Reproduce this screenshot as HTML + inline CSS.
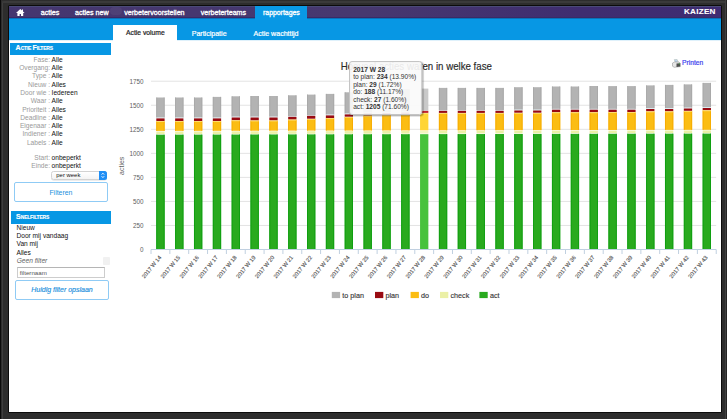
<!DOCTYPE html>
<html><head><meta charset="utf-8">
<style>
*{margin:0;padding:0;box-sizing:border-box}
html,body{width:727px;height:419px;overflow:hidden;background:#2d2d2d;font-family:"Liberation Sans",sans-serif}
.a{position:absolute;white-space:nowrap}
.f{position:absolute}
.screen{position:absolute;left:9px;top:6px;width:712px;height:406px;background:#fff;overflow:hidden}
.nav{position:absolute;left:9px;top:6px;width:712px;height:12.4px;background:linear-gradient(90deg,#45366f 0%,#47386f 50%,#3f2d70 80%,#3f2c72 100%);border-top:0.8px solid #4a4a78;border-bottom:1px solid #3a2a66}
.nav .it{position:absolute;top:0;height:12.3px;line-height:12.6px;color:#fff;font-size:7.1px;white-space:nowrap;-webkit-text-stroke:0.3px #fff}
.nav .act{background:#0797e4}
.blue{position:absolute;left:9px;top:18.4px;width:712px;height:21.3px;background:#0797e4;border-top:1px solid #0a72b8}
.tab{position:absolute;top:25.7px;height:14px;line-height:15px;font-size:7.05px;color:#fff;white-space:nowrap;-webkit-text-stroke:0.2px currentColor}
.tab.sel{background:#fff;color:#222}
.sbh{position:absolute;background:#0797e4;color:#fff;font-weight:bold;font-size:7px;white-space:nowrap;-webkit-text-stroke:0.15px #fff}
.sc{font-size:4.9px;letter-spacing:-0.15px}
.lab{position:absolute;color:#999;font-size:6.6px;line-height:8.29px;text-align:right;white-space:nowrap}
.val{position:absolute;color:#111;font-size:6.6px;line-height:8.29px;white-space:nowrap}
.btn{position:absolute;border:1.2px solid #8fcbf5;border-radius:2px;color:#1b8fdc;text-align:center;font-size:6.8px;background:#fff;white-space:nowrap}
.chart{position:absolute;left:0;top:0}
.chart text{font-family:"Liberation Sans",sans-serif}
.yl{font-size:6.3px;fill:#606060}
.xl{font-size:5.65px;fill:#505050;stroke:#505050;stroke-width:0.12px}
.yt{font-size:7px;fill:#606060}
.title{font-size:9.7px;fill:#2a2a2a;stroke:#2a2a2a;stroke-width:0.15px}
.lg{font-size:7.2px;fill:#333;stroke:#333;stroke-width:0.12px}
.tt{font-size:6.6px;fill:#333}
.b{font-weight:bold}
</style></head><body>
<div class="f" style="left:0;top:0;width:0.9px;height:419px;background:#0a0a0a"></div>
<div class="f" style="left:1.5px;top:1px;width:1.9px;height:418px;background:#3e3e3e;border-radius:3px 0 0 0"></div>
<div class="f" style="left:1.5px;top:1.1px;width:725px;height:1.7px;background:#3a3a3a;border-radius:3px 3px 0 0"></div>
<div class="f" style="left:724.6px;top:0;width:1.4px;height:419px;background:#404040"></div>
<div class="f" style="left:726px;top:0;width:1px;height:419px;background:#242424"></div>
<div class="f" style="left:7.9px;top:4.8px;width:714px;height:408.7px;background:#0c0c0c;border-radius:1.5px"></div>
<div class="screen"></div>
<div class="blue"></div>
<div class="a" style="left:177px;top:40px;width:544px;height:1px;background:#dff1fb"></div>
<div class="a" style="left:9px;top:40px;width:104px;height:1px;background:#dff1fb"></div>
<div class="nav">
  <div class="it" style="left:6.6px;top:1.9px;width:9px;height:8px;-webkit-text-stroke:0"><svg width="9" height="8" viewBox="0 0 9 8" style="display:block"><path d="M4.3 0 L0 4 L1.4 4 L1.4 7 L3.6 7 L3.6 5 L5 5 L5 7 L7.2 7 L7.2 4 L8.6 4 L7.0 2.5 L7.0 0.6 L6.0 0.6 L6.0 1.6 Z" fill="#fff"/></svg></div>
  <div class="it" style="left:31.8px">acties</div>
  <div class="it" style="left:66px">acties new</div>
  <div class="a" style="left:101px;top:0.4px;width:11.5px;height:8px;border-radius:4px;background:rgba(255,255,255,0.05)"></div>
  <div class="it" style="left:115.2px">verbetervoorstellen</div>
  <div class="it" style="left:191.7px">verbeterteams</div>
  <div class="it act" style="left:246px;top:-0.8px;height:14.2px;line-height:14.4px;z-index:2;width:52.3px;padding-left:8px;font-size:6.9px;background:#0999e6">rapportages</div>
  <div class="it" style="left:675px;top:-0.6px;font-weight:bold;letter-spacing:0.25px;font-size:8.1px;-webkit-text-stroke:0.1px #fff">KAIZEN</div>
</div>
<div class="a" style="left:113.2px;top:25.4px;width:63.8px;height:14.4px;background:#fff"></div>
<div class="tab" style="left:126px;top:26px;height:14px;line-height:14px;font-size:6.75px;color:#222">Actie volume</div>
<div class="tab" style="left:191.7px">Participatie</div>
<div class="tab" style="left:253.5px">Actie wachttijd</div>

<div class="sbh" style="left:10.3px;top:43px;width:100.7px;height:11.8px;line-height:10.9px;padding-left:5.3px"><span style="font-size:7px">A</span><span class="sc">CTIE </span><span style="font-size:7px">F</span><span class="sc">ILTERS</span></div>
<div class="lab" style="left:0;width:50px;top:55.8px">Fase:<br>Overgang:<br>Type :<br>Nieuw :<br>Door wie :<br>Waar :<br>Prioriteit :<br>Deadline :<br>Eigenaar :<br>Indiener :<br>Labels :</div>
<div class="val" style="left:51.6px;top:55.8px">Alle<br>Alle<br>Alle<br>Alles<br>Iedereen<br>Alle<br>Alles<br>Alle<br>Alle<br>Alle<br>Alle</div>
<div class="lab" style="left:0;width:50px;top:153.6px">Start:<br>Einde:</div>
<div class="val" style="left:51.6px;top:153.6px">onbeperkt<br>onbeperkt</div>
<div class="a" style="left:51.4px;top:170.5px;width:55.4px;height:9.1px;border:0.6px solid #d2d2d2;border-radius:2.5px;background:linear-gradient(#fff,#f4f4f4);box-shadow:0 0.4px 0.6px rgba(0,0,0,0.15);font-size:5.95px;line-height:7.2px;padding-left:3.9px;color:#111">per week</div>
<div class="a" style="left:99px;top:170.5px;width:7.8px;height:9.1px;background:#1f8ef5;border-radius:0 2.5px 2.5px 0"><svg width="8" height="9" viewBox="0 0 8 9" style="display:block"><path d="M2.6 3.6 L3.9 2.2 L5.2 3.6 M2.6 5.2 L3.9 6.6 L5.2 5.2" stroke="#fff" stroke-width="0.9" fill="none"/></svg></div>
<div class="btn" style="left:13.9px;top:182.4px;width:94px;height:19.2px;line-height:16px;padding-top:1.6px;font-size:6.9px">Filteren</div>

<div class="sbh" style="left:10.5px;top:211.3px;width:100px;height:12.4px;line-height:12px;padding-left:5.6px"><span style="font-size:7px">S</span><span class="sc">NELFILTERS</span></div>
<div class="val" style="left:16.5px;top:223.8px;line-height:8.3px">Nieuw<br>Door mij vandaag<br>Van mij<br>Alles</div>
<div class="val" style="left:16.7px;top:256.6px;color:#666;font-style:italic;font-size:6.65px">Geen filter</div>
<div class="a" style="left:103.2px;top:257px;width:7.2px;height:8px;background:#f1f1f1;border-radius:1px"></div>
<div class="a" style="left:17.2px;top:267.2px;width:87.8px;height:11px;border:0.6px solid #cdcdcd;border-top-color:#b5b5b5;font-size:6.2px;line-height:10px;padding-left:1.5px;color:#555">filternaam</div>
<div class="btn" style="left:15px;top:280.3px;width:94px;height:19.3px;line-height:17px;font-size:7px;font-style:italic;-webkit-text-stroke:0.15px #1b8fdc">Huidig filter opslaan</div>

<div class="a" style="left:672px;top:59px;width:9px;height:9px"><svg width="9" height="9" viewBox="0 0 9 9" style="display:block"><path d="M2.3 0.6 L5.2 0.6 L6.2 3.2 L3.2 3.2 Z" fill="#e8eef5" stroke="#9aa" stroke-width="0.5"/><path d="M3 1.5 L4.6 1.5 L5 2.6 L3.4 2.6 Z" fill="#8ab4e8"/><path d="M0.5 4 L2.5 3 L7 3 L8.3 4.3 L8.3 7.6 L2.2 8.3 L0.5 7.2 Z" fill="#e6e6e6" stroke="#8a8a8a" stroke-width="0.5"/><path d="M4.5 4.6 L8.2 4.3 L8.2 7.6 L4.5 8.1 Z" fill="#4e4e4e"/><rect x="6.8" y="4.5" width="0.9" height="0.8" fill="#3c3"/></svg></div>
<div class="a" style="left:682px;top:58.6px;font-size:6.7px;line-height:8px;color:#4343ee;-webkit-text-stroke:0.2px #4343ee">Printen</div>
<svg class="chart" width="727" height="419" viewBox="0 0 727 419"><line x1="151" y1="225.46" x2="716.2" y2="225.46" stroke="#e3e3e3" stroke-width="1"/>
<line x1="151" y1="201.42" x2="716.2" y2="201.42" stroke="#e3e3e3" stroke-width="1"/>
<line x1="151" y1="177.38" x2="716.2" y2="177.38" stroke="#e3e3e3" stroke-width="1"/>
<line x1="151" y1="153.34" x2="716.2" y2="153.34" stroke="#e3e3e3" stroke-width="1"/>
<line x1="151" y1="129.30" x2="716.2" y2="129.30" stroke="#e3e3e3" stroke-width="1"/>
<line x1="151" y1="105.26" x2="716.2" y2="105.26" stroke="#e3e3e3" stroke-width="1"/>
<line x1="151" y1="81.22" x2="716.2" y2="81.22" stroke="#e3e3e3" stroke-width="1"/>
<text x="143.6" y="252.00" text-anchor="end" class="yl">0</text>
<text x="143.6" y="227.96" text-anchor="end" class="yl">250</text>
<text x="143.6" y="203.92" text-anchor="end" class="yl">500</text>
<text x="143.6" y="179.88" text-anchor="end" class="yl">750</text>
<text x="143.6" y="155.84" text-anchor="end" class="yl">1000</text>
<text x="143.6" y="131.80" text-anchor="end" class="yl">1250</text>
<text x="143.6" y="107.76" text-anchor="end" class="yl">1500</text>
<text x="143.6" y="83.72" text-anchor="end" class="yl">1750</text>
<rect x="156.30" y="97.50" width="8.3" height="20.10" fill="#b3b3b3"/>
<rect x="156.30" y="97.50" width="0.9" height="20.10" fill="#a8a8a8"/>
<rect x="163.70" y="97.50" width="0.9" height="20.10" fill="#a8a8a8"/>
<rect x="156.30" y="117.60" width="8.3" height="0.8" fill="#d4ecf0"/>
<rect x="156.30" y="118.40" width="8.3" height="2.60" fill="#990b12"/>
<rect x="156.30" y="121.30" width="8.3" height="9.60" fill="#fbbd13"/>
<rect x="156.30" y="121.30" width="0.9" height="9.60" fill="#f6ab00"/>
<rect x="163.70" y="121.30" width="0.9" height="9.60" fill="#f6ab00"/>
<rect x="156.30" y="121.30" width="8.3" height="0.7" fill="#fde27a"/>
<rect x="156.30" y="131.50" width="8.3" height="2.60" fill="#ebf0a6"/>
<rect x="156.30" y="134.70" width="8.3" height="114.80" fill="#29aa1e"/>
<rect x="156.30" y="134.70" width="0.9" height="114.80" fill="#0e9e10"/>
<rect x="163.70" y="134.70" width="0.9" height="114.80" fill="#0e9e10"/>
<rect x="175.14" y="97.50" width="8.3" height="20.10" fill="#b3b3b3"/>
<rect x="175.14" y="97.50" width="0.9" height="20.10" fill="#a8a8a8"/>
<rect x="182.54" y="97.50" width="0.9" height="20.10" fill="#a8a8a8"/>
<rect x="175.14" y="117.60" width="8.3" height="0.8" fill="#d4ecf0"/>
<rect x="175.14" y="118.40" width="8.3" height="2.60" fill="#990b12"/>
<rect x="175.14" y="121.30" width="8.3" height="9.56" fill="#fbbd13"/>
<rect x="175.14" y="121.30" width="0.9" height="9.56" fill="#f6ab00"/>
<rect x="182.54" y="121.30" width="0.9" height="9.56" fill="#f6ab00"/>
<rect x="175.14" y="121.30" width="8.3" height="0.7" fill="#fde27a"/>
<rect x="175.14" y="131.46" width="8.3" height="2.60" fill="#ebf0a6"/>
<rect x="175.14" y="134.66" width="8.3" height="114.84" fill="#29aa1e"/>
<rect x="175.14" y="134.66" width="0.9" height="114.84" fill="#0e9e10"/>
<rect x="182.54" y="134.66" width="0.9" height="114.84" fill="#0e9e10"/>
<rect x="193.98" y="97.50" width="8.3" height="20.10" fill="#b3b3b3"/>
<rect x="193.98" y="97.50" width="0.9" height="20.10" fill="#a8a8a8"/>
<rect x="201.38" y="97.50" width="0.9" height="20.10" fill="#a8a8a8"/>
<rect x="193.98" y="117.60" width="8.3" height="0.8" fill="#d4ecf0"/>
<rect x="193.98" y="118.40" width="8.3" height="2.60" fill="#990b12"/>
<rect x="193.98" y="121.30" width="8.3" height="9.52" fill="#fbbd13"/>
<rect x="193.98" y="121.30" width="0.9" height="9.52" fill="#f6ab00"/>
<rect x="201.38" y="121.30" width="0.9" height="9.52" fill="#f6ab00"/>
<rect x="193.98" y="121.30" width="8.3" height="0.7" fill="#fde27a"/>
<rect x="193.98" y="131.42" width="8.3" height="2.60" fill="#ebf0a6"/>
<rect x="193.98" y="134.62" width="8.3" height="114.88" fill="#29aa1e"/>
<rect x="193.98" y="134.62" width="0.9" height="114.88" fill="#0e9e10"/>
<rect x="201.38" y="134.62" width="0.9" height="114.88" fill="#0e9e10"/>
<rect x="212.82" y="96.90" width="8.3" height="20.70" fill="#b3b3b3"/>
<rect x="212.82" y="96.90" width="0.9" height="20.70" fill="#a8a8a8"/>
<rect x="220.22" y="96.90" width="0.9" height="20.70" fill="#a8a8a8"/>
<rect x="212.82" y="117.60" width="8.3" height="0.8" fill="#d4ecf0"/>
<rect x="212.82" y="118.40" width="8.3" height="2.60" fill="#990b12"/>
<rect x="212.82" y="121.30" width="8.3" height="9.49" fill="#fbbd13"/>
<rect x="212.82" y="121.30" width="0.9" height="9.49" fill="#f6ab00"/>
<rect x="220.22" y="121.30" width="0.9" height="9.49" fill="#f6ab00"/>
<rect x="212.82" y="121.30" width="8.3" height="0.7" fill="#fde27a"/>
<rect x="212.82" y="131.39" width="8.3" height="2.60" fill="#ebf0a6"/>
<rect x="212.82" y="134.59" width="8.3" height="114.91" fill="#29aa1e"/>
<rect x="212.82" y="134.59" width="0.9" height="114.91" fill="#0e9e10"/>
<rect x="220.22" y="134.59" width="0.9" height="114.91" fill="#0e9e10"/>
<rect x="231.66" y="96.30" width="8.3" height="20.40" fill="#b3b3b3"/>
<rect x="231.66" y="96.30" width="0.9" height="20.40" fill="#a8a8a8"/>
<rect x="239.06" y="96.30" width="0.9" height="20.40" fill="#a8a8a8"/>
<rect x="231.66" y="116.70" width="8.3" height="0.8" fill="#d4ecf0"/>
<rect x="231.66" y="117.50" width="8.3" height="2.70" fill="#990b12"/>
<rect x="231.66" y="120.50" width="8.3" height="10.25" fill="#fbbd13"/>
<rect x="231.66" y="120.50" width="0.9" height="10.25" fill="#f6ab00"/>
<rect x="239.06" y="120.50" width="0.9" height="10.25" fill="#f6ab00"/>
<rect x="231.66" y="120.50" width="8.3" height="0.7" fill="#fde27a"/>
<rect x="231.66" y="131.35" width="8.3" height="2.60" fill="#ebf0a6"/>
<rect x="231.66" y="134.55" width="8.3" height="114.95" fill="#29aa1e"/>
<rect x="231.66" y="134.55" width="0.9" height="114.95" fill="#0e9e10"/>
<rect x="239.06" y="134.55" width="0.9" height="114.95" fill="#0e9e10"/>
<rect x="250.50" y="96.00" width="8.3" height="20.70" fill="#b3b3b3"/>
<rect x="250.50" y="96.00" width="0.9" height="20.70" fill="#a8a8a8"/>
<rect x="257.90" y="96.00" width="0.9" height="20.70" fill="#a8a8a8"/>
<rect x="250.50" y="116.70" width="8.3" height="0.8" fill="#d4ecf0"/>
<rect x="250.50" y="117.50" width="8.3" height="2.90" fill="#990b12"/>
<rect x="250.50" y="120.70" width="8.3" height="10.01" fill="#fbbd13"/>
<rect x="250.50" y="120.70" width="0.9" height="10.01" fill="#f6ab00"/>
<rect x="257.90" y="120.70" width="0.9" height="10.01" fill="#f6ab00"/>
<rect x="250.50" y="120.70" width="8.3" height="0.7" fill="#fde27a"/>
<rect x="250.50" y="131.31" width="8.3" height="2.60" fill="#ebf0a6"/>
<rect x="250.50" y="134.51" width="8.3" height="114.99" fill="#29aa1e"/>
<rect x="250.50" y="134.51" width="0.9" height="114.99" fill="#0e9e10"/>
<rect x="257.90" y="134.51" width="0.9" height="114.99" fill="#0e9e10"/>
<rect x="269.34" y="96.00" width="8.3" height="20.70" fill="#b3b3b3"/>
<rect x="269.34" y="96.00" width="0.9" height="20.70" fill="#a8a8a8"/>
<rect x="276.74" y="96.00" width="0.9" height="20.70" fill="#a8a8a8"/>
<rect x="269.34" y="116.70" width="8.3" height="0.8" fill="#d4ecf0"/>
<rect x="269.34" y="117.50" width="8.3" height="2.90" fill="#990b12"/>
<rect x="269.34" y="120.70" width="8.3" height="9.97" fill="#fbbd13"/>
<rect x="269.34" y="120.70" width="0.9" height="9.97" fill="#f6ab00"/>
<rect x="276.74" y="120.70" width="0.9" height="9.97" fill="#f6ab00"/>
<rect x="269.34" y="120.70" width="8.3" height="0.7" fill="#fde27a"/>
<rect x="269.34" y="131.27" width="8.3" height="2.60" fill="#ebf0a6"/>
<rect x="269.34" y="134.47" width="8.3" height="115.03" fill="#29aa1e"/>
<rect x="269.34" y="134.47" width="0.9" height="115.03" fill="#0e9e10"/>
<rect x="276.74" y="134.47" width="0.9" height="115.03" fill="#0e9e10"/>
<rect x="288.18" y="95.30" width="8.3" height="20.70" fill="#b3b3b3"/>
<rect x="288.18" y="95.30" width="0.9" height="20.70" fill="#a8a8a8"/>
<rect x="295.58" y="95.30" width="0.9" height="20.70" fill="#a8a8a8"/>
<rect x="288.18" y="116.00" width="8.3" height="0.8" fill="#d4ecf0"/>
<rect x="288.18" y="116.80" width="8.3" height="2.70" fill="#990b12"/>
<rect x="288.18" y="119.80" width="8.3" height="10.83" fill="#fbbd13"/>
<rect x="288.18" y="119.80" width="0.9" height="10.83" fill="#f6ab00"/>
<rect x="295.58" y="119.80" width="0.9" height="10.83" fill="#f6ab00"/>
<rect x="288.18" y="119.80" width="8.3" height="0.7" fill="#fde27a"/>
<rect x="288.18" y="131.23" width="8.3" height="2.60" fill="#ebf0a6"/>
<rect x="288.18" y="134.43" width="8.3" height="115.07" fill="#29aa1e"/>
<rect x="288.18" y="134.43" width="0.9" height="115.07" fill="#0e9e10"/>
<rect x="295.58" y="134.43" width="0.9" height="115.07" fill="#0e9e10"/>
<rect x="307.02" y="94.60" width="8.3" height="20.40" fill="#b3b3b3"/>
<rect x="307.02" y="94.60" width="0.9" height="20.40" fill="#a8a8a8"/>
<rect x="314.42" y="94.60" width="0.9" height="20.40" fill="#a8a8a8"/>
<rect x="307.02" y="115.00" width="8.3" height="0.8" fill="#d4ecf0"/>
<rect x="307.02" y="115.80" width="8.3" height="2.90" fill="#990b12"/>
<rect x="307.02" y="119.00" width="8.3" height="11.60" fill="#fbbd13"/>
<rect x="307.02" y="119.00" width="0.9" height="11.60" fill="#f6ab00"/>
<rect x="314.42" y="119.00" width="0.9" height="11.60" fill="#f6ab00"/>
<rect x="307.02" y="119.00" width="8.3" height="0.7" fill="#fde27a"/>
<rect x="307.02" y="131.20" width="8.3" height="2.60" fill="#ebf0a6"/>
<rect x="307.02" y="134.40" width="8.3" height="115.10" fill="#29aa1e"/>
<rect x="307.02" y="134.40" width="0.9" height="115.10" fill="#0e9e10"/>
<rect x="314.42" y="134.40" width="0.9" height="115.10" fill="#0e9e10"/>
<rect x="325.86" y="93.90" width="8.3" height="20.70" fill="#b3b3b3"/>
<rect x="325.86" y="93.90" width="0.9" height="20.70" fill="#a8a8a8"/>
<rect x="333.26" y="93.90" width="0.9" height="20.70" fill="#a8a8a8"/>
<rect x="325.86" y="114.60" width="8.3" height="0.8" fill="#d4ecf0"/>
<rect x="325.86" y="115.40" width="8.3" height="2.70" fill="#990b12"/>
<rect x="325.86" y="118.40" width="8.3" height="12.16" fill="#fbbd13"/>
<rect x="325.86" y="118.40" width="0.9" height="12.16" fill="#f6ab00"/>
<rect x="333.26" y="118.40" width="0.9" height="12.16" fill="#f6ab00"/>
<rect x="325.86" y="118.40" width="8.3" height="0.7" fill="#fde27a"/>
<rect x="325.86" y="131.16" width="8.3" height="2.60" fill="#ebf0a6"/>
<rect x="325.86" y="134.36" width="8.3" height="115.14" fill="#29aa1e"/>
<rect x="325.86" y="134.36" width="0.9" height="115.14" fill="#0e9e10"/>
<rect x="333.26" y="134.36" width="0.9" height="115.14" fill="#0e9e10"/>
<rect x="344.70" y="92.30" width="8.3" height="21.30" fill="#b3b3b3"/>
<rect x="344.70" y="92.30" width="0.9" height="21.30" fill="#a8a8a8"/>
<rect x="352.10" y="92.30" width="0.9" height="21.30" fill="#a8a8a8"/>
<rect x="344.70" y="113.60" width="8.3" height="0.8" fill="#d4ecf0"/>
<rect x="344.70" y="114.40" width="8.3" height="2.30" fill="#990b12"/>
<rect x="344.70" y="117.00" width="8.3" height="13.52" fill="#fbbd13"/>
<rect x="344.70" y="117.00" width="0.9" height="13.52" fill="#f6ab00"/>
<rect x="352.10" y="117.00" width="0.9" height="13.52" fill="#f6ab00"/>
<rect x="344.70" y="117.00" width="8.3" height="0.7" fill="#fde27a"/>
<rect x="344.70" y="131.12" width="8.3" height="2.60" fill="#ebf0a6"/>
<rect x="344.70" y="134.32" width="8.3" height="115.18" fill="#29aa1e"/>
<rect x="344.70" y="134.32" width="0.9" height="115.18" fill="#0e9e10"/>
<rect x="352.10" y="134.32" width="0.9" height="115.18" fill="#0e9e10"/>
<rect x="363.54" y="91.00" width="8.3" height="21.50" fill="#b3b3b3"/>
<rect x="363.54" y="91.00" width="0.9" height="21.50" fill="#a8a8a8"/>
<rect x="370.94" y="91.00" width="0.9" height="21.50" fill="#a8a8a8"/>
<rect x="363.54" y="112.50" width="8.3" height="0.8" fill="#d4ecf0"/>
<rect x="363.54" y="113.30" width="8.3" height="2.20" fill="#990b12"/>
<rect x="363.54" y="115.80" width="8.3" height="14.68" fill="#fbbd13"/>
<rect x="363.54" y="115.80" width="0.9" height="14.68" fill="#f6ab00"/>
<rect x="370.94" y="115.80" width="0.9" height="14.68" fill="#f6ab00"/>
<rect x="363.54" y="115.80" width="8.3" height="0.7" fill="#fde27a"/>
<rect x="363.54" y="131.08" width="8.3" height="2.60" fill="#ebf0a6"/>
<rect x="363.54" y="134.28" width="8.3" height="115.22" fill="#29aa1e"/>
<rect x="363.54" y="134.28" width="0.9" height="115.22" fill="#0e9e10"/>
<rect x="370.94" y="134.28" width="0.9" height="115.22" fill="#0e9e10"/>
<rect x="382.38" y="90.00" width="8.3" height="22.20" fill="#b3b3b3"/>
<rect x="382.38" y="90.00" width="0.9" height="22.20" fill="#a8a8a8"/>
<rect x="389.78" y="90.00" width="0.9" height="22.20" fill="#a8a8a8"/>
<rect x="382.38" y="112.20" width="8.3" height="0.8" fill="#d4ecf0"/>
<rect x="382.38" y="113.00" width="8.3" height="2.20" fill="#990b12"/>
<rect x="382.38" y="115.50" width="8.3" height="14.94" fill="#fbbd13"/>
<rect x="382.38" y="115.50" width="0.9" height="14.94" fill="#f6ab00"/>
<rect x="389.78" y="115.50" width="0.9" height="14.94" fill="#f6ab00"/>
<rect x="382.38" y="115.50" width="8.3" height="0.7" fill="#fde27a"/>
<rect x="382.38" y="131.04" width="8.3" height="2.60" fill="#ebf0a6"/>
<rect x="382.38" y="134.24" width="8.3" height="115.26" fill="#29aa1e"/>
<rect x="382.38" y="134.24" width="0.9" height="115.26" fill="#0e9e10"/>
<rect x="389.78" y="134.24" width="0.9" height="115.26" fill="#0e9e10"/>
<rect x="401.22" y="89.20" width="8.3" height="22.50" fill="#b3b3b3"/>
<rect x="401.22" y="89.20" width="0.9" height="22.50" fill="#a8a8a8"/>
<rect x="408.62" y="89.20" width="0.9" height="22.50" fill="#a8a8a8"/>
<rect x="401.22" y="111.70" width="8.3" height="0.8" fill="#d4ecf0"/>
<rect x="401.22" y="112.50" width="8.3" height="2.20" fill="#990b12"/>
<rect x="401.22" y="115.00" width="8.3" height="15.41" fill="#fbbd13"/>
<rect x="401.22" y="115.00" width="0.9" height="15.41" fill="#f6ab00"/>
<rect x="408.62" y="115.00" width="0.9" height="15.41" fill="#f6ab00"/>
<rect x="401.22" y="115.00" width="8.3" height="0.7" fill="#fde27a"/>
<rect x="401.22" y="131.01" width="8.3" height="2.60" fill="#ebf0a6"/>
<rect x="401.22" y="134.21" width="8.3" height="115.29" fill="#29aa1e"/>
<rect x="401.22" y="134.21" width="0.9" height="115.29" fill="#0e9e10"/>
<rect x="408.62" y="134.21" width="0.9" height="115.29" fill="#0e9e10"/>
<rect x="420.06" y="88.60" width="8.3" height="21.40" fill="#c9c9c9"/>
<rect x="420.06" y="110.00" width="8.3" height="0.8" fill="#d4ecf0"/>
<rect x="420.06" y="110.80" width="8.3" height="2.10" fill="#c2232a"/>
<rect x="420.06" y="113.20" width="8.3" height="17.17" fill="#ffd535"/>
<rect x="420.06" y="113.20" width="8.3" height="0.7" fill="#fde27a"/>
<rect x="420.06" y="130.97" width="8.3" height="2.60" fill="#f2f5bf"/>
<rect x="420.06" y="134.17" width="8.3" height="115.33" fill="#47c23c"/>
<rect x="438.90" y="87.90" width="8.3" height="22.10" fill="#b3b3b3"/>
<rect x="438.90" y="87.90" width="0.9" height="22.10" fill="#a8a8a8"/>
<rect x="446.30" y="87.90" width="0.9" height="22.10" fill="#a8a8a8"/>
<rect x="438.90" y="110.00" width="8.3" height="0.8" fill="#d4ecf0"/>
<rect x="438.90" y="110.80" width="8.3" height="2.10" fill="#990b12"/>
<rect x="438.90" y="113.20" width="8.3" height="17.13" fill="#fbbd13"/>
<rect x="438.90" y="113.20" width="0.9" height="17.13" fill="#f6ab00"/>
<rect x="446.30" y="113.20" width="0.9" height="17.13" fill="#f6ab00"/>
<rect x="438.90" y="113.20" width="8.3" height="0.7" fill="#fde27a"/>
<rect x="438.90" y="130.93" width="8.3" height="2.60" fill="#ebf0a6"/>
<rect x="438.90" y="134.13" width="8.3" height="115.37" fill="#29aa1e"/>
<rect x="438.90" y="134.13" width="0.9" height="115.37" fill="#0e9e10"/>
<rect x="446.30" y="134.13" width="0.9" height="115.37" fill="#0e9e10"/>
<rect x="457.74" y="87.90" width="8.3" height="22.10" fill="#b3b3b3"/>
<rect x="457.74" y="87.90" width="0.9" height="22.10" fill="#a8a8a8"/>
<rect x="465.14" y="87.90" width="0.9" height="22.10" fill="#a8a8a8"/>
<rect x="457.74" y="110.00" width="8.3" height="0.8" fill="#d4ecf0"/>
<rect x="457.74" y="110.80" width="8.3" height="2.10" fill="#990b12"/>
<rect x="457.74" y="113.20" width="8.3" height="17.09" fill="#fbbd13"/>
<rect x="457.74" y="113.20" width="0.9" height="17.09" fill="#f6ab00"/>
<rect x="465.14" y="113.20" width="0.9" height="17.09" fill="#f6ab00"/>
<rect x="457.74" y="113.20" width="8.3" height="0.7" fill="#fde27a"/>
<rect x="457.74" y="130.89" width="8.3" height="2.60" fill="#ebf0a6"/>
<rect x="457.74" y="134.09" width="8.3" height="115.41" fill="#29aa1e"/>
<rect x="457.74" y="134.09" width="0.9" height="115.41" fill="#0e9e10"/>
<rect x="465.14" y="134.09" width="0.9" height="115.41" fill="#0e9e10"/>
<rect x="476.58" y="87.90" width="8.3" height="22.10" fill="#b3b3b3"/>
<rect x="476.58" y="87.90" width="0.9" height="22.10" fill="#a8a8a8"/>
<rect x="483.98" y="87.90" width="0.9" height="22.10" fill="#a8a8a8"/>
<rect x="476.58" y="110.00" width="8.3" height="0.8" fill="#d4ecf0"/>
<rect x="476.58" y="110.80" width="8.3" height="2.10" fill="#990b12"/>
<rect x="476.58" y="113.20" width="8.3" height="17.06" fill="#fbbd13"/>
<rect x="476.58" y="113.20" width="0.9" height="17.06" fill="#f6ab00"/>
<rect x="483.98" y="113.20" width="0.9" height="17.06" fill="#f6ab00"/>
<rect x="476.58" y="113.20" width="8.3" height="0.7" fill="#fde27a"/>
<rect x="476.58" y="130.86" width="8.3" height="2.60" fill="#ebf0a6"/>
<rect x="476.58" y="134.06" width="8.3" height="115.44" fill="#29aa1e"/>
<rect x="476.58" y="134.06" width="0.9" height="115.44" fill="#0e9e10"/>
<rect x="483.98" y="134.06" width="0.9" height="115.44" fill="#0e9e10"/>
<rect x="495.42" y="87.90" width="8.3" height="22.10" fill="#b3b3b3"/>
<rect x="495.42" y="87.90" width="0.9" height="22.10" fill="#a8a8a8"/>
<rect x="502.82" y="87.90" width="0.9" height="22.10" fill="#a8a8a8"/>
<rect x="495.42" y="110.00" width="8.3" height="0.8" fill="#d4ecf0"/>
<rect x="495.42" y="110.80" width="8.3" height="2.10" fill="#990b12"/>
<rect x="495.42" y="113.20" width="8.3" height="17.02" fill="#fbbd13"/>
<rect x="495.42" y="113.20" width="0.9" height="17.02" fill="#f6ab00"/>
<rect x="502.82" y="113.20" width="0.9" height="17.02" fill="#f6ab00"/>
<rect x="495.42" y="113.20" width="8.3" height="0.7" fill="#fde27a"/>
<rect x="495.42" y="130.82" width="8.3" height="2.60" fill="#ebf0a6"/>
<rect x="495.42" y="134.02" width="8.3" height="115.48" fill="#29aa1e"/>
<rect x="495.42" y="134.02" width="0.9" height="115.48" fill="#0e9e10"/>
<rect x="502.82" y="134.02" width="0.9" height="115.48" fill="#0e9e10"/>
<rect x="514.26" y="87.20" width="8.3" height="22.50" fill="#b3b3b3"/>
<rect x="514.26" y="87.20" width="0.9" height="22.50" fill="#a8a8a8"/>
<rect x="521.66" y="87.20" width="0.9" height="22.50" fill="#a8a8a8"/>
<rect x="514.26" y="109.70" width="8.3" height="0.8" fill="#d4ecf0"/>
<rect x="514.26" y="110.50" width="8.3" height="2.20" fill="#990b12"/>
<rect x="514.26" y="113.00" width="8.3" height="17.18" fill="#fbbd13"/>
<rect x="514.26" y="113.00" width="0.9" height="17.18" fill="#f6ab00"/>
<rect x="521.66" y="113.00" width="0.9" height="17.18" fill="#f6ab00"/>
<rect x="514.26" y="113.00" width="8.3" height="0.7" fill="#fde27a"/>
<rect x="514.26" y="130.78" width="8.3" height="2.60" fill="#ebf0a6"/>
<rect x="514.26" y="133.98" width="8.3" height="115.52" fill="#29aa1e"/>
<rect x="514.26" y="133.98" width="0.9" height="115.52" fill="#0e9e10"/>
<rect x="521.66" y="133.98" width="0.9" height="115.52" fill="#0e9e10"/>
<rect x="533.10" y="87.20" width="8.3" height="22.50" fill="#b3b3b3"/>
<rect x="533.10" y="87.20" width="0.9" height="22.50" fill="#a8a8a8"/>
<rect x="540.50" y="87.20" width="0.9" height="22.50" fill="#a8a8a8"/>
<rect x="533.10" y="109.70" width="8.3" height="0.8" fill="#d4ecf0"/>
<rect x="533.10" y="110.50" width="8.3" height="2.20" fill="#990b12"/>
<rect x="533.10" y="113.00" width="8.3" height="17.14" fill="#fbbd13"/>
<rect x="533.10" y="113.00" width="0.9" height="17.14" fill="#f6ab00"/>
<rect x="540.50" y="113.00" width="0.9" height="17.14" fill="#f6ab00"/>
<rect x="533.10" y="113.00" width="8.3" height="0.7" fill="#fde27a"/>
<rect x="533.10" y="130.74" width="8.3" height="2.60" fill="#ebf0a6"/>
<rect x="533.10" y="133.94" width="8.3" height="115.56" fill="#29aa1e"/>
<rect x="533.10" y="133.94" width="0.9" height="115.56" fill="#0e9e10"/>
<rect x="540.50" y="133.94" width="0.9" height="115.56" fill="#0e9e10"/>
<rect x="551.94" y="86.50" width="8.3" height="22.40" fill="#b3b3b3"/>
<rect x="551.94" y="86.50" width="0.9" height="22.40" fill="#a8a8a8"/>
<rect x="559.34" y="86.50" width="0.9" height="22.40" fill="#a8a8a8"/>
<rect x="551.94" y="108.90" width="8.3" height="0.8" fill="#d4ecf0"/>
<rect x="551.94" y="109.70" width="8.3" height="2.50" fill="#990b12"/>
<rect x="551.94" y="112.50" width="8.3" height="17.60" fill="#fbbd13"/>
<rect x="551.94" y="112.50" width="0.9" height="17.60" fill="#f6ab00"/>
<rect x="559.34" y="112.50" width="0.9" height="17.60" fill="#f6ab00"/>
<rect x="551.94" y="112.50" width="8.3" height="0.7" fill="#fde27a"/>
<rect x="551.94" y="130.70" width="8.3" height="2.60" fill="#ebf0a6"/>
<rect x="551.94" y="133.90" width="8.3" height="115.60" fill="#29aa1e"/>
<rect x="551.94" y="133.90" width="0.9" height="115.60" fill="#0e9e10"/>
<rect x="559.34" y="133.90" width="0.9" height="115.60" fill="#0e9e10"/>
<rect x="570.78" y="86.50" width="8.3" height="22.40" fill="#b3b3b3"/>
<rect x="570.78" y="86.50" width="0.9" height="22.40" fill="#a8a8a8"/>
<rect x="578.18" y="86.50" width="0.9" height="22.40" fill="#a8a8a8"/>
<rect x="570.78" y="108.90" width="8.3" height="0.8" fill="#d4ecf0"/>
<rect x="570.78" y="109.70" width="8.3" height="2.50" fill="#990b12"/>
<rect x="570.78" y="112.50" width="8.3" height="17.57" fill="#fbbd13"/>
<rect x="570.78" y="112.50" width="0.9" height="17.57" fill="#f6ab00"/>
<rect x="578.18" y="112.50" width="0.9" height="17.57" fill="#f6ab00"/>
<rect x="570.78" y="112.50" width="8.3" height="0.7" fill="#fde27a"/>
<rect x="570.78" y="130.67" width="8.3" height="2.60" fill="#ebf0a6"/>
<rect x="570.78" y="133.87" width="8.3" height="115.63" fill="#29aa1e"/>
<rect x="570.78" y="133.87" width="0.9" height="115.63" fill="#0e9e10"/>
<rect x="578.18" y="133.87" width="0.9" height="115.63" fill="#0e9e10"/>
<rect x="589.62" y="86.00" width="8.3" height="22.90" fill="#b3b3b3"/>
<rect x="589.62" y="86.00" width="0.9" height="22.90" fill="#a8a8a8"/>
<rect x="597.02" y="86.00" width="0.9" height="22.90" fill="#a8a8a8"/>
<rect x="589.62" y="108.90" width="8.3" height="0.8" fill="#d4ecf0"/>
<rect x="589.62" y="109.70" width="8.3" height="2.50" fill="#990b12"/>
<rect x="589.62" y="112.50" width="8.3" height="17.53" fill="#fbbd13"/>
<rect x="589.62" y="112.50" width="0.9" height="17.53" fill="#f6ab00"/>
<rect x="597.02" y="112.50" width="0.9" height="17.53" fill="#f6ab00"/>
<rect x="589.62" y="112.50" width="8.3" height="0.7" fill="#fde27a"/>
<rect x="589.62" y="130.63" width="8.3" height="2.60" fill="#ebf0a6"/>
<rect x="589.62" y="133.83" width="8.3" height="115.67" fill="#29aa1e"/>
<rect x="589.62" y="133.83" width="0.9" height="115.67" fill="#0e9e10"/>
<rect x="597.02" y="133.83" width="0.9" height="115.67" fill="#0e9e10"/>
<rect x="608.46" y="86.10" width="8.3" height="22.80" fill="#b3b3b3"/>
<rect x="608.46" y="86.10" width="0.9" height="22.80" fill="#a8a8a8"/>
<rect x="615.86" y="86.10" width="0.9" height="22.80" fill="#a8a8a8"/>
<rect x="608.46" y="108.90" width="8.3" height="0.8" fill="#d4ecf0"/>
<rect x="608.46" y="109.70" width="8.3" height="2.30" fill="#990b12"/>
<rect x="608.46" y="112.30" width="8.3" height="17.69" fill="#fbbd13"/>
<rect x="608.46" y="112.30" width="0.9" height="17.69" fill="#f6ab00"/>
<rect x="615.86" y="112.30" width="0.9" height="17.69" fill="#f6ab00"/>
<rect x="608.46" y="112.30" width="8.3" height="0.7" fill="#fde27a"/>
<rect x="608.46" y="130.59" width="8.3" height="2.60" fill="#ebf0a6"/>
<rect x="608.46" y="133.79" width="8.3" height="115.71" fill="#29aa1e"/>
<rect x="608.46" y="133.79" width="0.9" height="115.71" fill="#0e9e10"/>
<rect x="615.86" y="133.79" width="0.9" height="115.71" fill="#0e9e10"/>
<rect x="627.30" y="86.10" width="8.3" height="22.80" fill="#b3b3b3"/>
<rect x="627.30" y="86.10" width="0.9" height="22.80" fill="#a8a8a8"/>
<rect x="634.70" y="86.10" width="0.9" height="22.80" fill="#a8a8a8"/>
<rect x="627.30" y="108.90" width="8.3" height="0.8" fill="#d4ecf0"/>
<rect x="627.30" y="109.70" width="8.3" height="2.30" fill="#990b12"/>
<rect x="627.30" y="112.30" width="8.3" height="17.65" fill="#fbbd13"/>
<rect x="627.30" y="112.30" width="0.9" height="17.65" fill="#f6ab00"/>
<rect x="634.70" y="112.30" width="0.9" height="17.65" fill="#f6ab00"/>
<rect x="627.30" y="112.30" width="8.3" height="0.7" fill="#fde27a"/>
<rect x="627.30" y="130.55" width="8.3" height="2.60" fill="#ebf0a6"/>
<rect x="627.30" y="133.75" width="8.3" height="115.75" fill="#29aa1e"/>
<rect x="627.30" y="133.75" width="0.9" height="115.75" fill="#0e9e10"/>
<rect x="634.70" y="133.75" width="0.9" height="115.75" fill="#0e9e10"/>
<rect x="646.14" y="85.40" width="8.3" height="22.80" fill="#b3b3b3"/>
<rect x="646.14" y="85.40" width="0.9" height="22.80" fill="#a8a8a8"/>
<rect x="653.54" y="85.40" width="0.9" height="22.80" fill="#a8a8a8"/>
<rect x="646.14" y="108.20" width="8.3" height="0.8" fill="#d4ecf0"/>
<rect x="646.14" y="109.00" width="8.3" height="2.30" fill="#990b12"/>
<rect x="646.14" y="111.60" width="8.3" height="18.31" fill="#fbbd13"/>
<rect x="646.14" y="111.60" width="0.9" height="18.31" fill="#f6ab00"/>
<rect x="653.54" y="111.60" width="0.9" height="18.31" fill="#f6ab00"/>
<rect x="646.14" y="111.60" width="8.3" height="0.7" fill="#fde27a"/>
<rect x="646.14" y="130.51" width="8.3" height="2.60" fill="#ebf0a6"/>
<rect x="646.14" y="133.71" width="8.3" height="115.79" fill="#29aa1e"/>
<rect x="646.14" y="133.71" width="0.9" height="115.79" fill="#0e9e10"/>
<rect x="653.54" y="133.71" width="0.9" height="115.79" fill="#0e9e10"/>
<rect x="664.98" y="84.90" width="8.3" height="23.30" fill="#b3b3b3"/>
<rect x="664.98" y="84.90" width="0.9" height="23.30" fill="#a8a8a8"/>
<rect x="672.38" y="84.90" width="0.9" height="23.30" fill="#a8a8a8"/>
<rect x="664.98" y="108.20" width="8.3" height="0.8" fill="#d4ecf0"/>
<rect x="664.98" y="109.00" width="8.3" height="2.30" fill="#990b12"/>
<rect x="664.98" y="111.60" width="8.3" height="18.28" fill="#fbbd13"/>
<rect x="664.98" y="111.60" width="0.9" height="18.28" fill="#f6ab00"/>
<rect x="672.38" y="111.60" width="0.9" height="18.28" fill="#f6ab00"/>
<rect x="664.98" y="111.60" width="8.3" height="0.7" fill="#fde27a"/>
<rect x="664.98" y="130.48" width="8.3" height="2.60" fill="#ebf0a6"/>
<rect x="664.98" y="133.68" width="8.3" height="115.82" fill="#29aa1e"/>
<rect x="664.98" y="133.68" width="0.9" height="115.82" fill="#0e9e10"/>
<rect x="672.38" y="133.68" width="0.9" height="115.82" fill="#0e9e10"/>
<rect x="683.82" y="84.40" width="8.3" height="23.30" fill="#b3b3b3"/>
<rect x="683.82" y="84.40" width="0.9" height="23.30" fill="#a8a8a8"/>
<rect x="691.22" y="84.40" width="0.9" height="23.30" fill="#a8a8a8"/>
<rect x="683.82" y="107.70" width="8.3" height="0.8" fill="#d4ecf0"/>
<rect x="683.82" y="108.50" width="8.3" height="2.30" fill="#990b12"/>
<rect x="683.82" y="111.10" width="8.3" height="18.74" fill="#fbbd13"/>
<rect x="683.82" y="111.10" width="0.9" height="18.74" fill="#f6ab00"/>
<rect x="691.22" y="111.10" width="0.9" height="18.74" fill="#f6ab00"/>
<rect x="683.82" y="111.10" width="8.3" height="0.7" fill="#fde27a"/>
<rect x="683.82" y="130.44" width="8.3" height="2.60" fill="#ebf0a6"/>
<rect x="683.82" y="133.64" width="8.3" height="115.86" fill="#29aa1e"/>
<rect x="683.82" y="133.64" width="0.9" height="115.86" fill="#0e9e10"/>
<rect x="691.22" y="133.64" width="0.9" height="115.86" fill="#0e9e10"/>
<rect x="702.66" y="82.90" width="8.3" height="24.30" fill="#b3b3b3"/>
<rect x="702.66" y="82.90" width="0.9" height="24.30" fill="#a8a8a8"/>
<rect x="710.06" y="82.90" width="0.9" height="24.30" fill="#a8a8a8"/>
<rect x="702.66" y="107.20" width="8.3" height="0.8" fill="#d4ecf0"/>
<rect x="702.66" y="108.00" width="8.3" height="2.20" fill="#990b12"/>
<rect x="702.66" y="110.50" width="8.3" height="19.30" fill="#fbbd13"/>
<rect x="702.66" y="110.50" width="0.9" height="19.30" fill="#f6ab00"/>
<rect x="710.06" y="110.50" width="0.9" height="19.30" fill="#f6ab00"/>
<rect x="702.66" y="110.50" width="8.3" height="0.7" fill="#fde27a"/>
<rect x="702.66" y="130.40" width="8.3" height="2.60" fill="#ebf0a6"/>
<rect x="702.66" y="133.60" width="8.3" height="115.90" fill="#29aa1e"/>
<rect x="702.66" y="133.60" width="0.9" height="115.90" fill="#0e9e10"/>
<rect x="710.06" y="133.60" width="0.9" height="115.90" fill="#0e9e10"/>
<line x1="151" y1="249.5" x2="716.2" y2="249.5" stroke="#c0d0e0" stroke-width="1"/>
<line x1="151.03" y1="249.5" x2="151.03" y2="254.0" stroke="#c0d0e0" stroke-width="1"/>
<line x1="169.87" y1="249.5" x2="169.87" y2="254.0" stroke="#c0d0e0" stroke-width="1"/>
<line x1="188.71" y1="249.5" x2="188.71" y2="254.0" stroke="#c0d0e0" stroke-width="1"/>
<line x1="207.55" y1="249.5" x2="207.55" y2="254.0" stroke="#c0d0e0" stroke-width="1"/>
<line x1="226.39" y1="249.5" x2="226.39" y2="254.0" stroke="#c0d0e0" stroke-width="1"/>
<line x1="245.23" y1="249.5" x2="245.23" y2="254.0" stroke="#c0d0e0" stroke-width="1"/>
<line x1="264.07" y1="249.5" x2="264.07" y2="254.0" stroke="#c0d0e0" stroke-width="1"/>
<line x1="282.91" y1="249.5" x2="282.91" y2="254.0" stroke="#c0d0e0" stroke-width="1"/>
<line x1="301.75" y1="249.5" x2="301.75" y2="254.0" stroke="#c0d0e0" stroke-width="1"/>
<line x1="320.59" y1="249.5" x2="320.59" y2="254.0" stroke="#c0d0e0" stroke-width="1"/>
<line x1="339.43" y1="249.5" x2="339.43" y2="254.0" stroke="#c0d0e0" stroke-width="1"/>
<line x1="358.27" y1="249.5" x2="358.27" y2="254.0" stroke="#c0d0e0" stroke-width="1"/>
<line x1="377.11" y1="249.5" x2="377.11" y2="254.0" stroke="#c0d0e0" stroke-width="1"/>
<line x1="395.95" y1="249.5" x2="395.95" y2="254.0" stroke="#c0d0e0" stroke-width="1"/>
<line x1="414.79" y1="249.5" x2="414.79" y2="254.0" stroke="#c0d0e0" stroke-width="1"/>
<line x1="433.63" y1="249.5" x2="433.63" y2="254.0" stroke="#c0d0e0" stroke-width="1"/>
<line x1="452.47" y1="249.5" x2="452.47" y2="254.0" stroke="#c0d0e0" stroke-width="1"/>
<line x1="471.31" y1="249.5" x2="471.31" y2="254.0" stroke="#c0d0e0" stroke-width="1"/>
<line x1="490.15" y1="249.5" x2="490.15" y2="254.0" stroke="#c0d0e0" stroke-width="1"/>
<line x1="508.99" y1="249.5" x2="508.99" y2="254.0" stroke="#c0d0e0" stroke-width="1"/>
<line x1="527.83" y1="249.5" x2="527.83" y2="254.0" stroke="#c0d0e0" stroke-width="1"/>
<line x1="546.67" y1="249.5" x2="546.67" y2="254.0" stroke="#c0d0e0" stroke-width="1"/>
<line x1="565.51" y1="249.5" x2="565.51" y2="254.0" stroke="#c0d0e0" stroke-width="1"/>
<line x1="584.35" y1="249.5" x2="584.35" y2="254.0" stroke="#c0d0e0" stroke-width="1"/>
<line x1="603.19" y1="249.5" x2="603.19" y2="254.0" stroke="#c0d0e0" stroke-width="1"/>
<line x1="622.03" y1="249.5" x2="622.03" y2="254.0" stroke="#c0d0e0" stroke-width="1"/>
<line x1="640.87" y1="249.5" x2="640.87" y2="254.0" stroke="#c0d0e0" stroke-width="1"/>
<line x1="659.71" y1="249.5" x2="659.71" y2="254.0" stroke="#c0d0e0" stroke-width="1"/>
<line x1="678.55" y1="249.5" x2="678.55" y2="254.0" stroke="#c0d0e0" stroke-width="1"/>
<line x1="697.39" y1="249.5" x2="697.39" y2="254.0" stroke="#c0d0e0" stroke-width="1"/>
<line x1="716.23" y1="249.5" x2="716.23" y2="254.0" stroke="#c0d0e0" stroke-width="1"/>
<text transform="translate(161.65,257.5) rotate(-51)" text-anchor="end" class="xl">2017 W 14</text>
<text transform="translate(180.49,257.5) rotate(-51)" text-anchor="end" class="xl">2017 W 15</text>
<text transform="translate(199.33,257.5) rotate(-51)" text-anchor="end" class="xl">2017 W 16</text>
<text transform="translate(218.17,257.5) rotate(-51)" text-anchor="end" class="xl">2017 W 17</text>
<text transform="translate(237.01,257.5) rotate(-51)" text-anchor="end" class="xl">2017 W 18</text>
<text transform="translate(255.85,257.5) rotate(-51)" text-anchor="end" class="xl">2017 W 19</text>
<text transform="translate(274.69,257.5) rotate(-51)" text-anchor="end" class="xl">2017 W 20</text>
<text transform="translate(293.53,257.5) rotate(-51)" text-anchor="end" class="xl">2017 W 21</text>
<text transform="translate(312.37,257.5) rotate(-51)" text-anchor="end" class="xl">2017 W 22</text>
<text transform="translate(331.21,257.5) rotate(-51)" text-anchor="end" class="xl">2017 W 23</text>
<text transform="translate(350.05,257.5) rotate(-51)" text-anchor="end" class="xl">2017 W 24</text>
<text transform="translate(368.89,257.5) rotate(-51)" text-anchor="end" class="xl">2017 W 25</text>
<text transform="translate(387.73,257.5) rotate(-51)" text-anchor="end" class="xl">2017 W 26</text>
<text transform="translate(406.57,257.5) rotate(-51)" text-anchor="end" class="xl">2017 W 27</text>
<text transform="translate(425.41,257.5) rotate(-51)" text-anchor="end" class="xl">2017 W 28</text>
<text transform="translate(444.25,257.5) rotate(-51)" text-anchor="end" class="xl">2017 W 29</text>
<text transform="translate(463.09,257.5) rotate(-51)" text-anchor="end" class="xl">2017 W 30</text>
<text transform="translate(481.93,257.5) rotate(-51)" text-anchor="end" class="xl">2017 W 31</text>
<text transform="translate(500.77,257.5) rotate(-51)" text-anchor="end" class="xl">2017 W 32</text>
<text transform="translate(519.61,257.5) rotate(-51)" text-anchor="end" class="xl">2017 W 33</text>
<text transform="translate(538.45,257.5) rotate(-51)" text-anchor="end" class="xl">2017 W 34</text>
<text transform="translate(557.29,257.5) rotate(-51)" text-anchor="end" class="xl">2017 W 35</text>
<text transform="translate(576.13,257.5) rotate(-51)" text-anchor="end" class="xl">2017 W 36</text>
<text transform="translate(594.97,257.5) rotate(-51)" text-anchor="end" class="xl">2017 W 37</text>
<text transform="translate(613.81,257.5) rotate(-51)" text-anchor="end" class="xl">2017 W 38</text>
<text transform="translate(632.65,257.5) rotate(-51)" text-anchor="end" class="xl">2017 W 39</text>
<text transform="translate(651.49,257.5) rotate(-51)" text-anchor="end" class="xl">2017 W 40</text>
<text transform="translate(670.33,257.5) rotate(-51)" text-anchor="end" class="xl">2017 W 41</text>
<text transform="translate(689.17,257.5) rotate(-51)" text-anchor="end" class="xl">2017 W 42</text>
<text transform="translate(708.01,257.5) rotate(-51)" text-anchor="end" class="xl">2017 W 43</text>
<text transform="translate(124.3,165.8) rotate(-90)" text-anchor="middle" class="yt">acties</text>
<text transform="translate(416.3,69.7) scale(1,1.08)" text-anchor="middle" class="title">Hoeveel acties waren in welke fase</text>
<rect x="331.8" y="291.9" width="8.3" height="6.2" fill="#b3b3b3"/>
<text x="342.3" y="297.8" class="lg">to plan</text>
<rect x="375" y="291.9" width="8.3" height="6.2" fill="#990b12"/>
<text x="385.5" y="297.8" class="lg">plan</text>
<rect x="410.6" y="291.9" width="8.3" height="6.2" fill="#fbbd13"/>
<text x="421.1" y="297.8" class="lg">do</text>
<rect x="440" y="291.9" width="8.3" height="6.2" fill="#ebf0a6"/>
<text x="450.5" y="297.8" class="lg">check</text>
<rect x="479.4" y="291.9" width="8.3" height="6.2" fill="#29aa1e"/>
<text x="489.9" y="297.8" class="lg">act</text>
<g>
<rect x="350.5" y="62.5" width="72.3" height="53" rx="2.5" fill="none" stroke="#000" stroke-opacity="0.05" stroke-width="3"/>
<rect x="350.5" y="62.5" width="72.3" height="53" rx="2.5" fill="none" stroke="#000" stroke-opacity="0.1" stroke-width="2"/>
<rect x="350.5" y="62.5" width="72.3" height="53" rx="2.5" fill="none" stroke="#000" stroke-opacity="0.15" stroke-width="1"/>
<rect x="349.5" y="61.5" width="72.3" height="53" rx="2.5" fill="rgba(250,250,250,0.92)" stroke="#c4c4c4" stroke-width="1"/>
<text x="353.2" y="71.6" class="tt"><tspan class="b">2017 W 28</tspan></text>
<text x="353.2" y="79.1" class="tt">to plan: <tspan class="b">234</tspan> (13.90%)</text>
<text x="353.2" y="86.6" class="tt">plan: <tspan class="b">29</tspan> (1.72%)</text>
<text x="353.2" y="94.1" class="tt">do: <tspan class="b">188</tspan> (11.17%)</text>
<text x="353.2" y="101.6" class="tt">check: <tspan class="b">27</tspan> (1.60%)</text>
<text x="353.2" y="109.1" class="tt">act: <tspan class="b">1205</tspan> (71.60%)</text>
</g></svg>
</body></html>
